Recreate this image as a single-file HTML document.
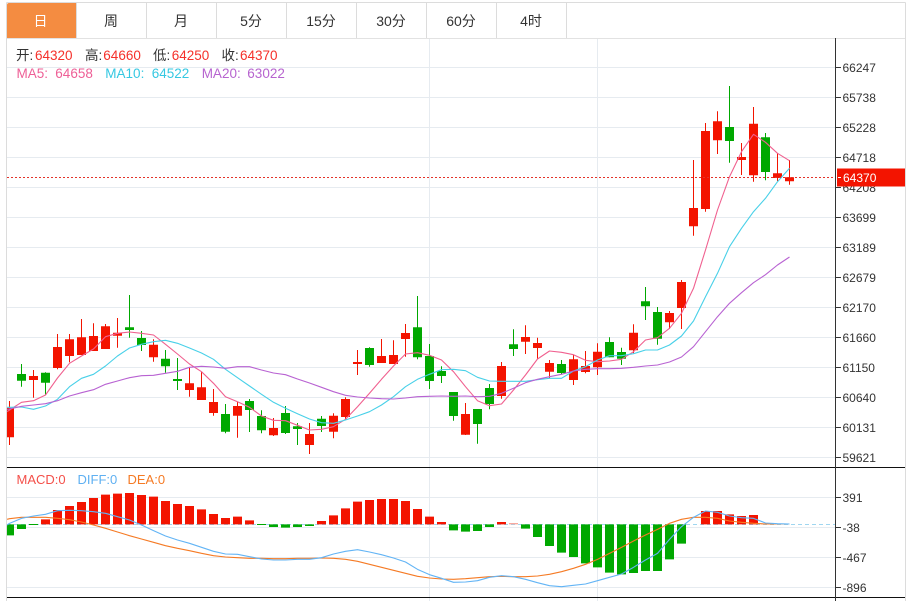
<!DOCTYPE html>
<html><head><meta charset="utf-8"><style>
html,body{margin:0;padding:0;background:#fff;width:911px;height:601px;overflow:hidden}
svg{display:block;position:absolute;left:0;top:0}
text{font-family:"Liberation Sans","Noto Sans CJK SC",sans-serif}
.v{vector-effect:non-scaling-stroke;fill:none;stroke-linejoin:round}
</style></head><body>
<svg width="911" height="601" viewBox="0 0 911 601" xmlns="http://www.w3.org/2000/svg">
<defs><clipPath id="c"><rect x="7" y="39" width="828" height="562"/></clipPath></defs>

<!-- grid -->
<path fill="none" stroke="#e6ebf0" stroke-width="1" d="M7 67.5H835M7 97.5H835M7 127.5H835M7 157.5H835M7 187.5H835M7 217.5H835M7 247.5H835M7 277.5H835M7 307.5H835M7 337.5H835M7 367.5H835M7 397.5H835M7 427.5H835M7 457.5H835M7 497.5H835M7 527.5H835M7 557.5H835M7 587.5H835M429.5 39V601M597.5 39V601"/>

<!-- frame and tabs -->
<path fill="none" stroke="#dcdcdc" stroke-width="1" d="M6.5 2.5H905.5M6.5 2.5V601M905.5 2.5V601M76.5 3V38M146.5 3V38M216.5 3V38M286.5 3V38M356.5 3V38M426.5 3V38M496.5 3V38M566.5 3V38"/>
<path fill="none" stroke="#e2e2e2" d="M7 38.5H905"/>
<path fill="#f48c41" d="M7 5a2 2 0 0 1 2-2H76V38H7z"/>
<g font-size="14" fill="#333" text-anchor="middle">
<text x="40.5" y="26" fill="#fff">日</text><text x="111" y="26">周</text><text x="181" y="26">月</text><text x="251" y="26">5分</text><text x="321" y="26">15分</text><text x="391" y="26">30分</text><text x="461" y="26">60分</text><text x="531" y="26">4时</text>
</g>

<g clip-path="url(#c)">
<!-- macd zero dashed -->
<path d="M7 524.5H835" stroke="#9fd6f0" stroke-width="1" stroke-dasharray="4 3" fill="none"/>

<!-- candles: wicks -->
<path fill="none" stroke="#f31400" stroke-width="1" d="M9.5 401V445M33.5 370V397.7M57.5 334V369.3M69.5 334V362.3M81.5 319V355M93.5 323.3V351M105.5 324V349M117.5 318V347.7M153.5 339.3V361.7M189.5 367.7V396.7M201.5 371.7V400M213.5 389V415.7M237.5 402V437.7M273.5 418V436M309.5 423V454M333.5 413.3V438.3M345.5 397.3V420M357.5 350V375M381.5 339V363M393.5 340.3V364M405.5 324V356.7M465.5 403V435M501.5 362V398.7M525.5 325.3V354M537.5 337.7V359M549.5 360V378.3M573.5 355V385M585.5 351V373.3M597.5 343.3V375M633.5 324.3V353.3M669.5 311V329M681.5 280V329M693.5 160V235.7M705.5 123V211.7M717.5 111.3V154M741.5 143V175M753.5 107V181.7M777.5 153.3V181M789.5 160V184.7"/>
<path fill="none" stroke="#00a800" stroke-width="1" d="M21.5 364V386.7M45.5 372.3V395M129.5 295V337.7M141.5 331V351M165.5 350V372.7M177.5 358V390M225.5 404V433.3M249.5 399V432M261.5 410.3V433.3M285.5 406V434M297.5 423V445M321.5 416V432M369.5 347.3V366.7M417.5 296V359.3M429.5 344V389M441.5 366.3V383M453.5 392V420.7M477.5 409V443.7M489.5 384V409.3M513.5 329.3V356M561.5 360V374M609.5 337.3V357.3M621.5 347.7V365M645.5 287V320M657.5 307V344.7M729.5 86V162.7M765.5 133V180.3"/>
<!-- candles: bodies -->
<path fill="none" stroke="#f31400" stroke-width="9" d="M9.5 407.7V437.3M33.5 376V380M57.5 347V368M69.5 339.3V356M81.5 337.3V355M93.5 336V351M105.5 326.3V349M117.5 332.7V335.7M153.5 344.7V357.3M189.5 383.3V390M201.5 387.3V400M213.5 402V413M237.5 406V415.7M273.5 428V435.3M309.5 434V445M333.5 415.7V431.7M345.5 399V417M357.5 362V364M381.5 356V363M393.5 355V364M405.5 333V339M465.5 414V434.7M501.5 366V396M525.5 337V341.7M537.5 343V348M549.5 363V371.7M573.5 359.3V380M585.5 366V372M597.5 351.7V367.3M633.5 332.7V350.3M669.5 313V322.3M681.5 282V308M693.5 208V226.3M705.5 131V209M717.5 121.3V140.3M741.5 157V160M753.5 123.7V175.3M777.5 173.3V178M789.5 177.3V181.3"/>
<path fill="none" stroke="#00a800" stroke-width="9" d="M21.5 374V380.7M45.5 372.7V382.7M129.5 327.3V330M141.5 338V345M165.5 358.7V366.3M177.5 379V381M225.5 414V431.7M249.5 401V410M261.5 416V430.3M285.5 413V433M297.5 426.3V429M321.5 418.7V426M369.5 348V365M417.5 327.3V357.3M429.5 356V381M441.5 371V376M453.5 392V416M477.5 409V424M489.5 388V404M513.5 344.3V349M561.5 364V373M609.5 342V357.3M621.5 352V358.7M645.5 301.3V306.3M657.5 312V338.7M729.5 127V141M765.5 137.3V172"/>

<!-- MA lines -->
<g transform="translate(9.5 0) scale(12 1)">
<polyline class="v" stroke="#f0608f" stroke-width="1.1" points="-.2,411.7 0,410 1,402.3 2,400.7 3,395 4,378 5,363.3 6,356 7,349 8,336.7 9,333.3 10,332 11,333.3 12,335 13,344.3 14,354 15,364 16,371.7 17,383.3 18,396.7 19,401.7 20,407.3 21,416 22,420.3 23,420.7 24,425.3 25,430 26,429.3 27,426.7 28,419.3 29,406.7 30,393.3 31,379.3 32,366 33,354 34,352.7 35,355.3 36,360 37,371.7 38,386.7 39,400.7 40,405.7 41,404 42,390 43,375 44,359 45,351 46,352.3 47,354.7 48,360.3 49,361.7 50,361 51,359.3 52,351.7 53,340 54,337.7 55,328.3 56,313.3 57,288.3 58,250 59,210 60,176.7 61,151.7 62,134.3 63,142.3 64,153.3 65,160.7"/>
<polyline class="v" stroke="#48d0e8" stroke-width="1.1" points="-.2,407.3 0,407.3 1,407 2,409.3 3,406 4,399.3 5,386.7 6,378.3 7,374.3 8,366 9,356 10,348 11,344.3 12,341.7 13,340.3 14,343.3 15,348 16,353 17,359.3 18,369.3 19,377.7 20,386 21,394.3 22,402.3 23,408.3 24,413.7 25,419 26,422.7 27,423.3 28,420 29,416 30,411.7 31,405 32,396.7 33,386.7 34,379.3 35,374.3 36,369.7 37,369.3 38,370.7 39,377.3 40,381 41,381.3 42,381.3 43,381.3 44,379.7 45,378.3 46,378.3 47,371 48,366.7 49,360 50,355.7 51,355.7 52,353.7 53,350 54,350 55,345 56,336 57,321 58,296.7 59,273.3 60,246.7 61,228.3 62,211.7 63,198.3 64,181.7 65,168.3"/>
<polyline class="v" stroke="#b862d2" stroke-width="1.1" points="-.2,409.3 0,409 1,406.3 2,405 3,403.7 4,400.7 5,396 6,392.7 7,389.7 8,384.3 9,381 10,377.7 11,375.7 12,375.3 13,373.3 14,371.3 15,367.3 16,366.3 17,367 18,368.3 19,366.7 20,366.7 21,370 22,373 23,374.7 24,379 25,383 26,387.3 27,391.7 28,395.3 29,397 30,398 31,398.7 32,399 33,398 34,396.7 35,396.3 36,396 37,396.3 38,396 39,396.7 40,396.3 41,393.3 42,388.3 43,382.7 44,379.3 45,376.7 46,374.3 47,371 48,369.3 49,368.7 50,368.7 51,368.3 52,367.3 53,366 54,365 55,362 56,357 57,346.7 58,331.7 59,316.7 60,303.3 61,292.7 62,282.7 63,274.7 64,265 65,257"/>
</g>

<!-- MACD bars -->
<g transform="translate(0 460) scale(1 .33333)">
<path class="v" stroke="#f31400" stroke-width="9" d="M45.5 193V178M57.5 193V150M69.5 193V138M81.5 193V126M93.5 193V114M105.5 193V104M117.5 193V101M129.5 193V99M141.5 193V105M153.5 193V110M165.5 193V123M177.5 193V132M189.5 193V138M201.5 193V148M213.5 193V162M225.5 193V174M237.5 193V170M249.5 193V181M321.5 193V183M333.5 193V166M345.5 193V145M357.5 193V125M369.5 193V120M381.5 193V117M393.5 193V117M405.5 193V123M417.5 193V147M429.5 193V170M441.5 193V186M501.5 193V186M705.5 193V153M717.5 193V153M729.5 193V163M741.5 193V168M753.5 193V165"/>
<path class="v" stroke="#f7a99f" stroke-width="9" d="M513.5 193V189M765.5 193V191"/>
<path class="v" stroke="#00a800" stroke-width="9" d="M9.5 193V226M21.5 193V207M33.5 192V195M261.5 192V195M273.5 193V201M285.5 193V203M297.5 193V201M309.5 193V198M453.5 193V211M465.5 193V215M477.5 193V213M489.5 193V201M525.5 193V206M537.5 193V231M549.5 193V258M561.5 193V278M573.5 193V291M585.5 193V310M597.5 193V322M609.5 193V338M621.5 193V343M633.5 193V339M645.5 193V333M657.5 193V333M669.5 193V298M681.5 193V251"/>
</g>
<!-- MACD lines -->
<g transform="translate(9.5 460) scale(12 .33333)">
<polyline class="v" stroke="#f57a24" stroke-width="1.1" points="-.2,178 0,176 1,172 2,172 3,172 4,175 5,179 6,186 7,195 8,205 9,216 10,227 11,237 12,247 13,257 14,265 15,272 16,280 17,287 18,291 19,293 20,295 21,295 22,296 23,296 24,295 25,295 26,294 27,295 28,298 29,304 30,313 31,322 32,331 33,340 34,349 35,354 36,357 37,358 38,356 39,353 40,350 41,349 42,350 43,350 44,348 45,343 46,335 47,325 48,313 49,298 50,280 51,262 52,243 53,225 54,208 55,190 56,178 57,172 58,172 59,175 60,183 61,187 62,190 63,192 64,192 65,192"/>
<polyline class="v" stroke="#62b4f5" stroke-width="1.1" points="-.2,195 0,190 1,175 2,168 3,163 4,152 5,151 6,152 7,155 8,160 9,170 10,180 11,195 12,212 13,228 14,240 15,250 16,262 17,274 18,282 19,283 20,290 21,297 22,300 23,300 24,298 25,298 26,293 27,282 28,274 29,269 30,276 31,284 32,294 33,306 34,328 35,344 36,355 37,367 38,366 39,362 40,352 41,347 42,350 43,358 44,368 45,377 46,380 47,376 48,372 49,362 50,352 51,342 52,322 53,300 54,280 55,238 56,200 57,172 58,153 59,157 60,168 61,173 62,175 63,189 64,191 65,192"/>
</g>

<!-- last price dashed -->
<path d="M7 177.5H835" stroke="#e3332a" stroke-width="1" stroke-dasharray="2 2" fill="none"/>
</g>

<!-- separator lines and axis -->
<path fill="none" stroke="#111" d="M7 467.5H905M7 597.5H905"/>
<path fill="none" stroke="#333" d="M835.5 38V601M836 67.5H841M836 97.5H841M836 127.5H841M836 157.5H841M836 187.5H841M836 217.5H841M836 247.5H841M836 277.5H841M836 307.5H841M836 337.5H841M836 367.5H841M836 397.5H841M836 427.5H841M836 457.5H841M836 497.5H841M836 527.5H841M836 557.5H841M836 587.5H841"/>

<g font-size="12" fill="#333" textLength="32">
<text x="842.5" y="72">66247</text><text x="842.5" y="102">65738</text><text x="842.5" y="132">65228</text><text x="842.5" y="162">64718</text><text x="842.5" y="192">64208</text><text x="842.5" y="222">63699</text><text x="842.5" y="252">63189</text><text x="842.5" y="282">62679</text><text x="842.5" y="312">62170</text><text x="842.5" y="342">61660</text><text x="842.5" y="372">61150</text><text x="842.5" y="402">60640</text><text x="842.5" y="432">60131</text><text x="842.5" y="462">59621</text>
<text x="842.5" y="502">391</text><text x="842.5" y="532">-38</text><text x="842.5" y="562">-467</text><text x="842.5" y="592">-896</text>
</g>

<!-- price tag -->
<rect x="837" y="168.5" width="68" height="18" fill="#f31400"/>
<path d="M838 177.5H841" stroke="#fff"/>
<text x="843" y="182" font-size="12" fill="#fff">64370</text>

<!-- legends -->
<g font-size="13.5">
<text x="16" y="60" fill="#333">开:</text><text x="35" y="60" fill="#f5302a">64320</text>
<text x="85" y="60" fill="#333">高:</text><text x="103.3" y="60" fill="#f5302a">64660</text>
<text x="153" y="60" fill="#333">低:</text><text x="171.7" y="60" fill="#f5302a">64250</text>
<text x="221.5" y="60" fill="#333">收:</text><text x="240" y="60" fill="#f5302a">64370</text>
<g fill="#ee5f96"><text x="16.5" y="78">MA5:</text><text x="55.3" y="78">64658</text></g>
<g fill="#35c8e2"><text x="105.3" y="78">MA10:</text><text x="151.7" y="78">64522</text></g>
<g fill="#b764cf"><text x="201.7" y="78">MA20:</text><text x="247.3" y="78">63022</text></g>
</g>
<g font-size="13">
<text x="16.5" y="484" fill="#f4504a">MACD:0</text>
<text x="77.5" y="484" fill="#5fb0f2">DIFF:0</text>
<text x="127.5" y="484" fill="#f57a24">DEA:0</text>
</g>
</svg>
</body></html>
